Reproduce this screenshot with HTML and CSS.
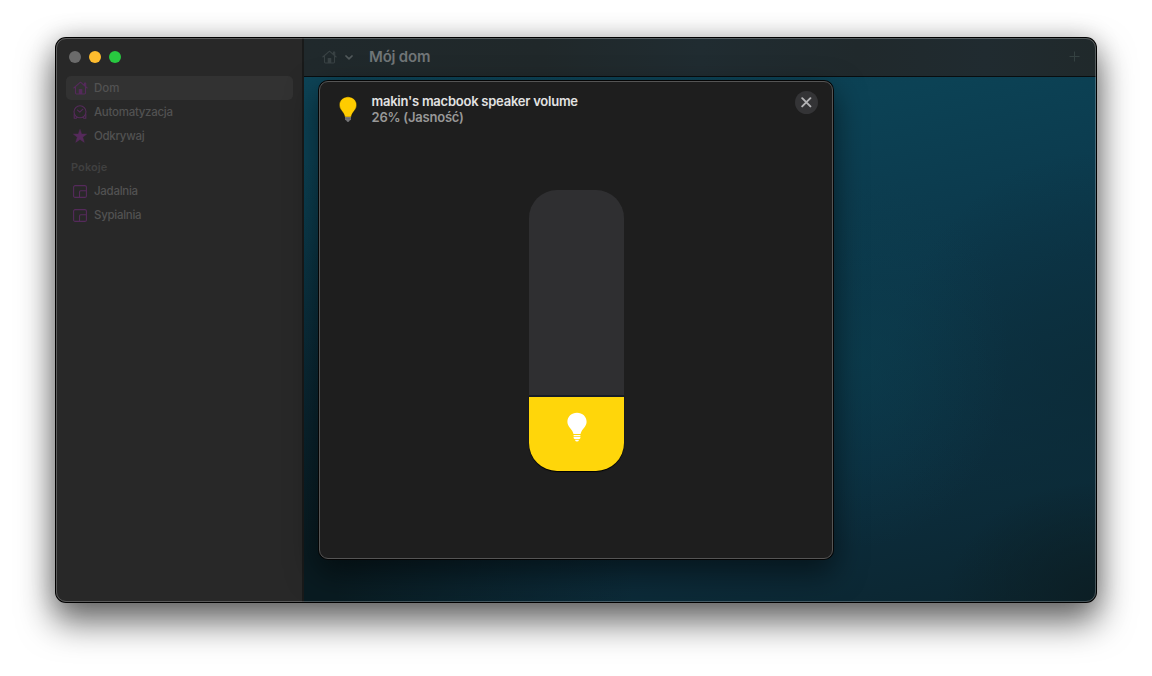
FILE: index.html
```html
<!DOCTYPE html>
<html lang="pl">
<head>
<meta charset="utf-8">
<title>Mój dom</title>
<link rel="stylesheet" href="styles.css">
</head>
<body>
<svg class="defs" aria-hidden="true">
  <symbol id="house" viewBox="0 0 15 14"><path d="M.8 7 7.500 1.200 14.200 7M11.500 4.400V2h1.200v3.400M2.500 5.800v6.300q0 .9.900.9h8.200q.9 0 .9-.9V5.800" fill="none" stroke="currentColor" stroke-width="1.100" stroke-linecap="round" stroke-linejoin="round"/><path d="M5.700 13V8.600q0-.6.6-.6h2.400q.6 0 .6.6V13z" fill="currentColor"/></symbol>
  <symbol id="clock" viewBox="0 0 14 14"><circle cx="7" cy="6.800" r="6" fill="none" stroke="currentColor" stroke-width="1.100"/><path d="m4.500 5.200 2.300 2 3.100-3M1.200 9v4.300h1.900l1-1.100M12.800 9v4.300h-1.900l-1-1.100" fill="none" stroke="currentColor" stroke-width="1.100" stroke-linecap="round" stroke-linejoin="round"/></symbol>
  <symbol id="star" viewBox="0 0 14 14"><path d="m7 .2 1.700 4.800h5.100L9.800 8.200l1.500 5.200L7 10.400l-4.300 3 1.500-5.200L.2 5h5.100z" fill="currentColor" stroke="currentColor" stroke-width=".4" stroke-linejoin="round"/></symbol>
  <symbol id="room" viewBox="0 0 14 13"><rect x=".6" y=".6" width="12.800" height="11.800" rx="1.500" fill="none" stroke="currentColor" stroke-width="1.100"/><path d="M6.500 12.200V7.100q0-1.300 1.300-1.300h5.400" fill="none" stroke="currentColor" stroke-width="1.100"/></symbol>
</svg>
<div class="window">
  <aside class="sidebar">
    <div class="lights"><i class="light"></i><i class="light light-min"></i><i class="light light-zoom"></i></div>
    <nav class="nav">
      <a class="item item-active"><svg class="icon icon-house"><use href="#house"/></svg><span>Dom</span></a>
      <a class="item"><svg class="icon"><use href="#clock"/></svg><span>Automatyzacja</span></a>
      <a class="item"><svg class="icon"><use href="#star"/></svg><span>Odkrywaj</span></a>
    </nav>
    <h2 class="heading">Pokoje</h2>
    <nav class="nav">
      <a class="item"><svg class="icon icon-room"><use href="#room"/></svg><span>Jadalnia</span></a>
      <a class="item"><svg class="icon icon-room"><use href="#room"/></svg><span>Sypialnia</span></a>
    </nav>
  </aside>
  <main class="main">
    <header class="toolbar">
      <svg class="home"><use href="#house"/></svg>
      <svg class="chevron" viewBox="0 0 8 5"><path d="m.9.9 3.100 3 3.100-3" fill="none" stroke="currentColor" stroke-width="1.500" stroke-linecap="round" stroke-linejoin="round"/></svg>
      <h1 class="title">Mój dom</h1>
      <svg class="plus" viewBox="0 0 11 11"><path d="M5.500.5v10M.5 5.500h10" stroke="currentColor" fill="none"/></svg>
    </header>
    <div class="wallpaper"></div>
  </main>
  <section class="dialog">
    <header class="dialog-head">
      <svg class="bulb" viewBox="0 0 20 27"><path d="M10 .8c-5 0-8.700 3.700-8.700 8.300 0 4.900 4.400 6.500 5.300 11.200q.2.900 1 .9h4.800q.8 0 1-.9c.9-4.700 5.300-6.300 5.300-11.200C18.700 4.500 15 .8 10 .8z" fill="#fc0" stroke="#111" stroke-width=".5"/><path d="M7 21h6v2.700l-1.400.9Q11.300 26 10 26t-1.600-1.400L7 23.700z" fill="#77777a"/><path d="M7 22.800h6" stroke="#55555a" stroke-width=".5"/></svg>
      <div class="labels"><p class="name">makin's macbook speaker volume</p><p class="value">26% (Jasność)</p></div>
      <button class="close" aria-label="Zamknij"><svg class="cross" viewBox="0 0 11 11"><path d="m1.200 1.200 8.200 8.200m0-8.200-8.200 8.200" stroke="#b4b4b6" stroke-width="1.900" stroke-linecap="round"/></svg></button>
    </header>
    <div class="slider">
      <div class="fill">
        <svg class="lamp" viewBox="0 0 20 30"><path d="M10 .8C4.500.8.400 4.700.400 9.800c0 4.300 3.300 6.400 4.900 9.300.5.900.9 1.900 1.200 3h7c.3-1.100.7-2.100 1.200-3 1.600-2.900 4.900-5 4.900-9.300 0-5.100-4.100-9-9.600-9z" fill="#fff"/><path d="M6.600 22.900h6.800v1.300H6.600zM6.600 25h6.800v1.100q0 .9-1.700 1.200H8.300q-1.700-.3-1.700-1.200zM8 28h4q-.5 1.500-2 1.500T8 28z" fill="#fff"/></svg>
      </div>
    </div>
  </section>
</div>
</body>
</html>
```
FILE: styles.css
```css
* { box-sizing: border-box; }
body { margin: 0; height: 676px; padding: 38px 56px; background: #fff; font-family: Inter, "Noto Sans", sans-serif; overflow: hidden; }
.defs { position: absolute; width: 0; height: 0; }
h1, h2, p { margin: 0; }
.window { position: relative; display: flex; width: 1040px; height: 564px; border-radius: 10px; background: #282828; box-shadow: 0 0 0 1px #000, 0 18px 34px 3px rgba(0,0,0,.56), 0 0 26px rgba(0,0,0,.2); }
.window::after { content: ""; position: absolute; inset: 0; border-radius: 10px; border: 1px solid rgba(255,255,255,.24); pointer-events: none; }
.sidebar { width: 248px; padding: 13px 10px; border-right: 2px solid #191a1a; border-radius: 10px 0 0 10px; background: #282828; }
.lights { display: flex; gap: 8px; padding-left: 3px; }
.light { width: 12px; height: 12px; border-radius: 50%; background: #6b6b6b; }
.light-min { background: #febc2e; }
.light-zoom { background: #28c840; }
.nav { display: grid; grid-auto-rows: 24px; }
.lights + .nav { margin-top: 13px; }
.item { display: flex; align-items: center; gap: 7px; width: 227px; padding-left: 7px; border-radius: 5px; font-size: 11.5px; font-weight: 500; letter-spacing: -.28px; color: #525252; }
.item-active { background: #323232; letter-spacing: 0; }
.icon { width: 14px; height: 14px; color: #552a5b; }
.icon-house { width: 15px; margin-right: -1px; }
.icon-room { height: 13px; }
.heading { height: 31px; padding: 12px 0 0 5px; font-size: 11px; line-height: 14px; font-weight: 600; letter-spacing: .1px; color: #404040; }
.main { display: flex; flex-direction: column; width: 792px; }
.toolbar { display: flex; align-items: center; height: 39px; padding: 0 16px 1px 18px; border-bottom: 1px solid #080d0f; border-radius: 0 10px 0 0; background: linear-gradient(90deg, #20292c, #20282a 30%, #202c31 50%, #20292c 70%, #202b30 86%, #20292b); }
.home { width: 15px; height: 14px; color: #394244; }
.chevron { width: 8px; height: 5px; margin: 1px 16px 0 8px; color: #51595b; }
.title { font-size: 15px; font-weight: 600; line-height: 20px; letter-spacing: -.2px; color: #707577; }
.plus { width: 11px; height: 11px; margin-left: auto; color: #344141; }
.wallpaper { flex: 1; border-radius: 0 0 10px 0; background:
  radial-gradient(ellipse 150px 120px at 100% 100%, #0c1e24, transparent),
  radial-gradient(ellipse 330px 440px at 0 100%, #091b21 10%, transparent),
  radial-gradient(ellipse 150px 190px at 555px 280px, rgba(11,62,78,.6), transparent),
  radial-gradient(ellipse 210px 240px at 100% 60%, rgba(12,43,55,.75), transparent),
  linear-gradient(168deg, #0d4457 0, #0c4255 20%, #0c374a 48%, #0c2f40 72%, #0c252f 100%); }
.dialog { position: absolute; left: 263px; top: 43px; width: 514px; height: 478px; border: 1px solid #555; border-radius: 9px; background: #1e1e1e; box-shadow: 0 0 0 1px #050505, 0 12px 30px 2px rgba(0,0,0,.5); }
.dialog-head { display: flex; align-items: flex-start; height: 108px; padding: 10px 14px 0 18px; }
.bulb { width: 20px; height: 27px; margin-top: 4px; }
.labels { margin-left: 13.5px; padding-top: 1px; font-size: 13px; line-height: 16px; font-weight: 600; white-space: nowrap; }
.name { color: #e2e2e2; letter-spacing: -.24px; }
.value { color: #989898; letter-spacing: -.22px; }
.close { display: grid; place-items: center; width: 23px; height: 23px; margin: -1px 0 0 auto; padding: 0; border: 0; border-radius: 50%; background: #343436; }
.cross { width: 11px; height: 11px; }
.slider { display: flex; align-items: flex-end; width: 95px; height: 281px; margin-left: 209px; border-radius: 28px; background: #2f2f31; }
.fill { display: flex; justify-content: center; width: 100%; height: 76px; padding-top: 15px; border-top: 2px solid #171c26; border-radius: 0 0 28px 28px; background: #ffd60a; box-shadow: 0 1px 1px #000; }
.lamp { width: 20px; height: 30px; }
```
